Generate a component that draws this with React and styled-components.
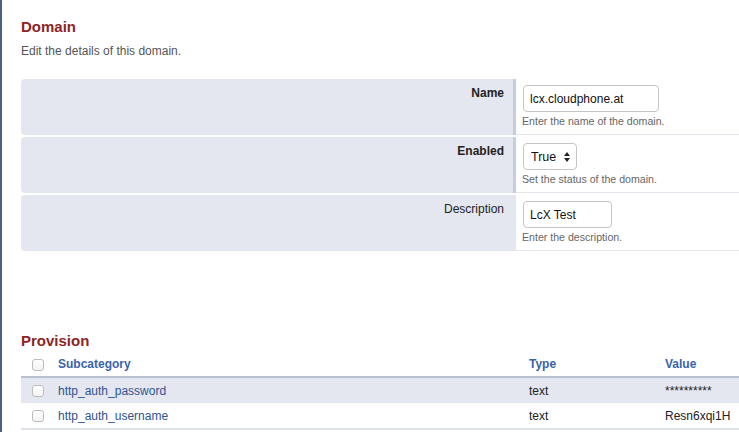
import React from "react";
import styled, { createGlobalStyle } from "styled-components";

const Global = createGlobalStyle`
  html, body { margin: 0; padding: 0; background: #fff; }
  body { font-family: "Liberation Sans", Arial, sans-serif; }
  * { box-sizing: border-box; }
`;

const Page = styled.div`
  min-height: 432px;
  border-left: 2px solid #4b6089;
  padding: 18px 0 0 19px;
  overflow: hidden;
`;

const Title = styled.h2`
  margin: ${(p) => p.$mt || 0}px 0 0;
  font-size: 15px;
  line-height: 18px;
  font-weight: bold;
  color: #8c2424;
`;

const Subtitle = styled.p`
  margin: 8px 0 0;
  font-size: 12px;
  line-height: 14px;
  color: #555;
`;

const Form = styled.div`
  margin-top: 21px;
  display: grid;
  grid-template-columns: 495px 1fr;
  row-gap: 2px;
`;

const LabelCell = styled.div`
  height: 56px;
  background: #e4e7ef;
  border-radius: 4px 0 0 4px;
  border-right: 3px solid ${(p) => (p.$required ? "#c9cdd7" : "#e4e7ef")};
  padding: 7px 9px 0 0;
  text-align: right;
  font-size: 12px;
  line-height: 14px;
  font-weight: ${(p) => (p.$required ? "bold" : "normal")};
  color: #222;
`;

const ValueCell = styled.div`
  height: 56px;
  border-bottom: 1px solid #e3e6ec;
  padding: 6px 0 0 7px;
`;

const TextInput = styled.div`
  width: ${(p) => p.$w}px;
  height: 27px;
  border: 1px solid #c4c4c4;
  border-radius: 4px;
  padding: 0 6px;
  display: flex;
  align-items: center;
  font-size: 12px;
  color: #111;
  background: #fff;
`;

const SelectBox = styled.div`
  width: 54px;
  height: 27px;
  border: 1px solid #c4c4c4;
  border-radius: 4px;
  padding: 0 6px 0 7px;
  display: flex;
  align-items: center;
  justify-content: space-between;
  font-size: 12.5px;
  color: #111;
  background: #fff;
`;

const Help = styled.div`
  margin-top: 3px;
  margin-left: -1px;
  font-size: 10.6px;
  line-height: 13px;
  color: #666;
`;

const Grid = styled.div`
  margin-top: 1px;
  display: grid;
  grid-template-columns: 29px 471px 136px 1fr;
`;

const HeadCell = styled.div`
  height: 27px;
  border-bottom: 2px solid #b9bfcc;
  padding-left: ${(p) => (p.$check ? 11 : 8)}px;
  padding-top: ${(p) => (p.$check ? 2 : 0)}px;
  display: flex;
  align-items: center;
  font-size: 12px;
  font-weight: bold;
  color: #3a63ab;
`;

const Cell = styled.div`
  height: ${(p) => (p.$last ? 27 : 25)}px;
  background: ${(p) => (p.$alt ? "#e4e7ef" : "#fff")};
  border-bottom: ${(p) => (p.$last ? "2px solid #dde1e8" : "none")};
  padding-left: ${(p) => (p.$check ? 11 : 8)}px;
  padding-top: ${(p) => (p.$check ? 1 : 0)}px;
  display: flex;
  align-items: center;
  font-size: 12px;
  color: ${(p) => (p.$link ? "#2d5394" : "#222")};
`;

const Check = styled.span`
  width: 12px;
  height: 12px;
  border: 1px solid #bcbcbc;
  border-radius: 3px;
  background: linear-gradient(#fff, #f3f3f3);
`;

const Arrows = () => (
  <svg width="6" height="10" viewBox="0 0 6 10">
    <path d="M3 0 L6 4 L0 4 Z" fill="#222" />
    <path d="M0 6 L6 6 L3 10 Z" fill="#222" />
  </svg>
);

const fields = [
  { label: "Name", required: true, help: "Enter the name of the domain.", input: { value: "lcx.cloudphone.at", w: 136 } },
  { label: "Enabled", required: true, help: "Set the status of the domain.", select: "True" },
  { label: "Description", required: false, help: "Enter the description.", input: { value: "LcX Test", w: 89 } },
];

const rows = [
  { sub: "http_auth_password", type: "text", value: "**********" },
  { sub: "http_auth_username", type: "text", value: "Resn6xqi1H" },
];

export default function App() {
  return (
    <>
      <Global />
      <Page>
        <Title>Domain</Title>
        <Subtitle>Edit the details of this domain.</Subtitle>
        <Form>
          {fields.map((f) => (
            <React.Fragment key={f.label}>
              <LabelCell $required={f.required}>{f.label}</LabelCell>
              <ValueCell>
                {f.input ? (
                  <TextInput $w={f.input.w}>{f.input.value}</TextInput>
                ) : (
                  <SelectBox>
                    <span>{f.select}</span>
                    <Arrows />
                  </SelectBox>
                )}
                <Help>{f.help}</Help>
              </ValueCell>
            </React.Fragment>
          ))}
        </Form>
        <Title $mt={81}>Provision</Title>
        <Grid>
          <HeadCell $check><Check /></HeadCell>
          <HeadCell>Subcategory</HeadCell>
          <HeadCell>Type</HeadCell>
          <HeadCell>Value</HeadCell>
          {rows.map((r, i) => {
            const alt = i % 2 === 0;
            const last = i === rows.length - 1;
            return (
              <React.Fragment key={r.sub}>
                <Cell $alt={alt} $last={last} $check><Check /></Cell>
                <Cell $alt={alt} $last={last} $link>{r.sub}</Cell>
                <Cell $alt={alt} $last={last}>{r.type}</Cell>
                <Cell $alt={alt} $last={last}>{r.value}</Cell>
              </React.Fragment>
            );
          })}
        </Grid>
      </Page>
    </>
  );
}
